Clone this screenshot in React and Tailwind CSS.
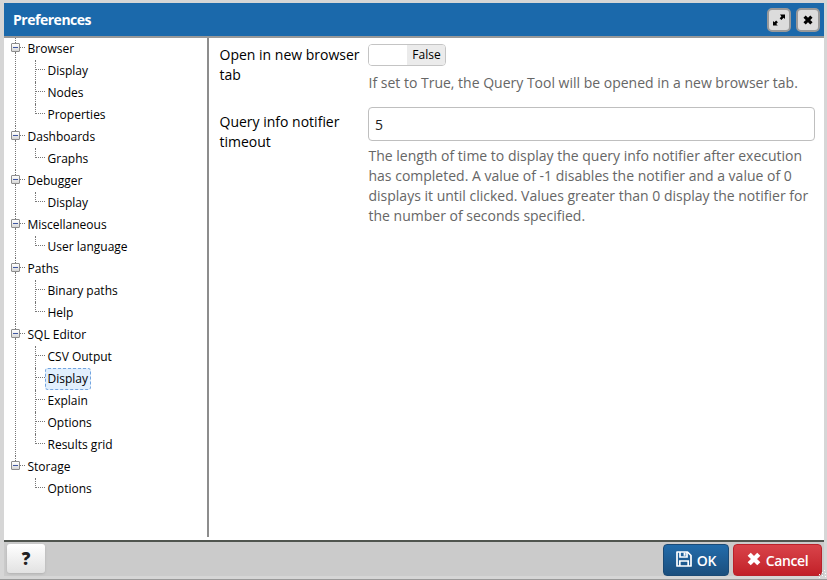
import React from "react";

const TREE = [
  { label: "Browser", children: ["Display", "Nodes", "Properties"] },
  { label: "Dashboards", children: ["Graphs"] },
  { label: "Debugger", children: ["Display"] },
  { label: "Miscellaneous", children: ["User language"] },
  { label: "Paths", children: ["Binary paths", "Help"] },
  { label: "SQL Editor", children: ["CSV Output", "Display", "Explain", "Options", "Results grid"] },
  { label: "Storage", children: ["Options"] },
];

function Child({ label, last, selected }) {
  return (
    <div className="flex h-[22px]">
      <div className={"w-px shrink-0 border-l border-dotted border-[#777] " + (last ? "h-[10px]" : "h-[22px]")} />
      <div className="mt-[9px] h-px w-[9px] shrink-0 border-t border-dotted border-[#777]" />
      <div
        className={
          "h-[22px] rounded-[3px] border border-dashed pr-[2px] pl-[1.5px] leading-[20px] whitespace-nowrap " +
          (selected ? "border-[#74a5e0] bg-[#e1effd]" : "border-transparent")
        }
      >
        {label}
      </div>
    </div>
  );
}

function Group({ node, last }) {
  return (
    <div className="flex">
      <div className="flex w-[9px] shrink-0 flex-col items-center">
        <div className="h-[5px] w-px border-l border-dotted border-[#777]" />
        <div className="flex h-[9px] w-[9px] shrink-0 items-center justify-center rounded-[1px] border border-[#8c8c8c] bg-linear-to-b from-white to-[#d8d8d8]">
          <div className="h-px w-[5px] bg-[#3f57a0]" />
        </div>
        {!last && <div className="w-px grow border-l border-dotted border-[#777]" />}
      </div>
      <div>
        <div className="flex h-[22px]">
          <div className="mt-[9px] h-px w-[5px] border-t border-dotted border-[#777]" />
          <div className="ml-[2.5px] leading-[22px] whitespace-nowrap">{node.label}</div>
        </div>
        <div className="pl-[15px]">
          {node.children.map((c, i) => (
            <Child
              key={c}
              label={c}
              last={i === node.children.length - 1}
              selected={node.label === "SQL Editor" && c === "Display"}
            />
          ))}
        </div>
      </div>
    </div>
  );
}

function Cross({ size }) {
  return (
    <svg width={size} height={size} viewBox="0 0 14 14" fill="none" stroke="currentColor" strokeWidth="4.400">
      <path d="M2.200 2.200l9.600 9.600M11.800 2.200l-9.600 9.600" />
    </svg>
  );
}

function HeaderButton({ children }) {
  return (
    <button className="flex h-6 w-6 items-center justify-center rounded-[5px] border-2 border-[#999] bg-[#dcdcdc] text-black">
      {children}
    </button>
  );
}

export default function App() {
  return (
    <div className="relative flex h-[580px] w-[827px] flex-col overflow-hidden border-b border-b-[#999] bg-[#d6d6d6] pt-[3px] pr-[3px] pb-[3px] pl-1 font-['Open_Sans',sans-serif] text-[14px] text-black">
      <header className="flex h-[35px] shrink-0 items-center justify-between border-b-2 border-[#999] bg-[#1b69ab] pr-[4px] pl-[9px]">
        <h1 className="text-[14px] font-bold tracking-[-0.48px] text-white">Preferences</h1>
        <div className="flex gap-[5px]">
          <HeaderButton>
            <svg width="14" height="14" viewBox="0 0 14 14" fill="currentColor">
              <path d="M8 1.500h5v4.500l-1.400-1.200-2.200 2.200L7.700 5.300l1.700-1.800z" />
              <path d="M5.800 12.500H1V8l1.400 1.200 1.700-1.800 1.800 1.800-1.700 1.700z" />
            </svg>
          </HeaderButton>
          <HeaderButton>
            <Cross size={10} />
          </HeaderButton>
        </div>
      </header>

      <main className="flex min-h-0 grow bg-white">
        <nav className="mb-[3px] w-[205px] shrink-0 border-r-2 border-[#8d8d8d] pl-[7px] text-[12px]">
          {TREE.map((n, i) => (
            <Group key={n.label} node={n} last={i === TREE.length - 1} />
          ))}
        </nav>
        <section className="grow pt-[6px] pr-[9px] pl-[10.5px] leading-5">
          <div className="flex">
            <div className="w-[148.5px] shrink-0 pt-[1px]">Open in new browser tab</div>
            <div className="grow">
              <div className="flex h-[22px] w-[78px] overflow-hidden rounded-[4px] border border-[#c4c4c4] text-[12px]">
                <div className="w-[38px] bg-white" />
                <div className="grow bg-[#ebebeb] pl-[1px] text-center leading-[20px]">False</div>
              </div>
              <p className="mt-[7px] pl-[0.5px] whitespace-nowrap text-[#666]">
                If set to True, the Query Tool will be opened in a new browser tab.
              </p>
            </div>
          </div>
          <div className="mt-[14px] flex">
            <div className="w-[148.5px] shrink-0 pt-[5px]">
              Query info notifier
              <br />
              timeout
            </div>
            <div className="grow">
              <div className="flex h-[34px] items-center rounded-[4px] border border-[#bfbfbf] pt-[2px] pl-[6px] text-[#222]">5</div>
              <p className="mt-[5px] pl-[0.5px] whitespace-nowrap text-[#666]">
                The length of time to display the query info notifier after execution
                <br />
                has completed. A value of -1 disables the notifier and a value of 0
                <br />
                displays it until clicked. Values greater than 0 display the notifier for
                <br />
                the number of seconds specified.
              </p>
            </div>
          </div>
        </section>
      </main>

      <footer className="flex h-[36px] shrink-0 items-start border-t-2 border-[#50554f] bg-[#cbcbcb] pt-[2px] pr-[2px] pl-[3px]">
        <button className="h-[29px] w-[38px] rounded-[3px] bg-linear-to-b from-white to-[#e2e2e2] text-[17px] leading-[28px] font-extrabold text-[#222] shadow-sm">
          ?
        </button>
        <div className="ml-auto flex gap-1">
          <button className="flex h-[32px] w-[66px] items-center justify-center gap-[5px] rounded-[4px] border border-[#1b4a75] bg-linear-to-b from-[#226cab] to-[#1b4f7e] text-[14px] font-semibold text-white">
            <svg className="-mt-[2px]" width="16" height="16" viewBox="0 0 16 16" fill="none" stroke="currentColor" strokeWidth="1.700">
              <path d="M1 1h10.500L15 4.500V15H1z" strokeLinejoin="round" />
              <path d="M4 1v5h7V1M3.800 15v-5h8.400v5" />
              <path d="M7.600 1.500h2v3.300h-2z" fill="currentColor" stroke="none" />
            </svg>
            <span className="tracking-[-0.3px]">OK</span>
          </button>
          <button className="flex h-[32px] w-[89px] items-center justify-center gap-[5px] rounded-[4px] border border-[#b9222a] bg-linear-to-b from-[#d9434a] to-[#c21f28] text-[14px] font-semibold text-white">
            <span className="-mt-[2px]">
              <Cross size={14} />
            </span>
            <span className="tracking-[-0.4px]">Cancel</span>
          </button>
        </div>
      </footer>

      <svg className="absolute right-0 bottom-0" width="9" height="9" viewBox="0 0 9 9" fill="#fff">
        <path d="M6 0h1v1h-1zM4 2h1v1h-1zM7 3h1v1h-1zM1 4h1v1h-1zM4 5h1v1h-1zM7 6h1v1h-1zM1 7h1v1h-1z" />
      </svg>
    </div>
  );
}
